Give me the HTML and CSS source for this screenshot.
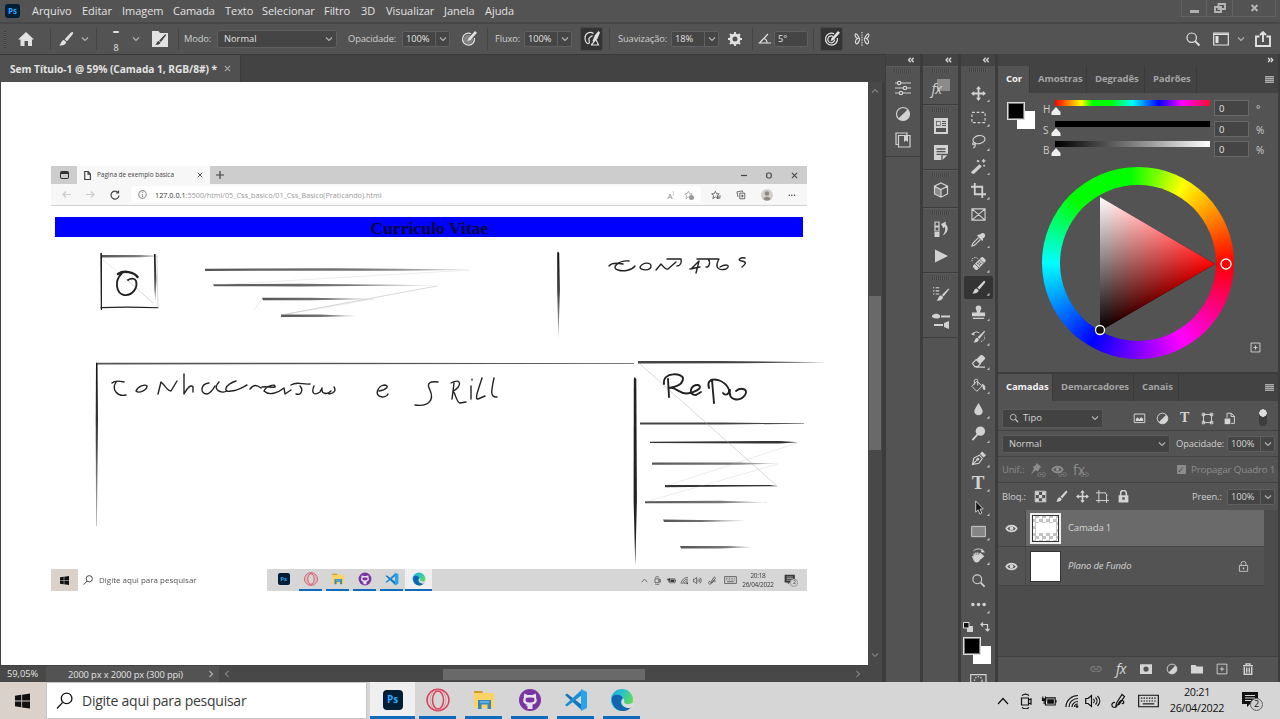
FILE: index.html
```html
<!DOCTYPE html>
<html lang="pt-BR">
<head>
<meta charset="utf-8">
<title>Sem Título-1 @ 59%</title>
<link rel="stylesheet" href="styles.css">
</head>
<body>
<svg class="defs" aria-hidden="true">
<defs>
<symbol id="chev" viewBox="0 0 8 8"><path class="ln" d="M1 2.500 4 5.500 7 2.500"/></symbol>
<symbol id="home" viewBox="0 0 16 16"><path d="M8 1 16 8.500H14V15H10V10H6.500V15H2.500V8.500H0Z"/></symbol>
<symbol id="brush" viewBox="0 0 16 16"><path d="M14.500 1C15.500 1.500 15.200 2.500 14.500 3.500L9 10.200 6.700 8.200 13 1.500C13.500 1 14 .8 14.500 1ZM6 9 8.200 11C8 13.500 5 15 1 14.300 3.500 13.500 2.500 9.500 6 9Z"/></symbol>
<symbol id="brushbox" viewBox="0 0 16 16"><path d="M0 0H6.500L8 2H16V16H0Z"/><path class="dk" d="M13.500 3 14.200 4 9 11 7.200 9.500ZM6.500 10 8.500 11.500C8 13.500 6 14 3 13.800 5 13 4.500 10.500 6.500 10Z"/></symbol>
<symbol id="pressop" viewBox="0 0 16 16"><path class="ln" d="M10 2.700A6 6 0 1 0 13.400 7M9 5.500A3.400 3.400 0 1 0 10.600 8.500"/><path d="M14 0 16 1.800 9.500 9 6.500 10.200 7.600 7.200Z"/></symbol>
<symbol id="press" viewBox="0 0 16 16"><path class="ln" d="M10 2.700A6 6 0 1 0 13.400 7"/><path class="soft" d="M9 4A4.700 4.700 0 1 0 12 8Z"/><path d="M14 0 16 1.800 9.500 9 6.500 10.200 7.600 7.200Z"/></symbol>
<symbol id="airbrush" viewBox="0 0 16 16"><path class="ln" d="M9.500 2.500C6 0 1 2 1 7 1 10 2.500 13 4.500 12.500 6.500 12 4.500 9.500 5 7.500 5.500 6 7.500 5.500 8.500 4.500M7 13.500C9.500 13 9.500 10 12 8.500L14.500 14H7"/><path d="M14.500 0 16 1.500 13.500 7.500 9.500 11 8.500 10 11 4Z"/></symbol>
<symbol id="gear" viewBox="0 0 16 16"><circle cx="8" cy="8" r="4" fill="none" stroke="currentColor" stroke-width="3"/><path class="ln th" d="M8 1V4M8 12V15M1 8H4M12 8H15M3 3 5 5M11 11 13 13M13 3 11 5M5 11 3 13"/></symbol>
<symbol id="angle" viewBox="0 0 16 16"><path class="ln" d="M10 3 1.500 12H13M6 7.500C8 8 9 10 9 12"/></symbol>
<symbol id="butter" viewBox="0 0 18 16"><path class="ln" d="M6.500 8C5 6 4 2 2 2 0 3 2 7 4 7.500 1 9 1 13 3 13.500 5 13 6 10 6.500 8M11.500 8C13 6 14 2 16 2 18 3 16 7 14 7.500 17 9 17 13 15 13.500 13 13 12 10 11.500 8"/><path class="ln dash" d="M9 0V16"/></symbol>
<symbol id="lens" viewBox="0 0 16 16"><circle class="ln" cx="6.700" cy="6.700" r="4.700"/><path class="ln th" d="M10.300 10.300 14.500 14.500"/></symbol>
<symbol id="wspace" viewBox="0 0 16 16"><path class="ln" d="M.7 2H15.300V14H.7ZM1 3.300H15"/><path d="M2.500 5H5.500V12H2.500Z"/></symbol>
<symbol id="share" viewBox="0 0 16 16"><path class="ln th" d="M4.500 5.500H1V15H15V5.500H11.500M8 11V1.500M5 4 8 1.200 11 4"/></symbol>
<symbol id="sliders" viewBox="0 0 16 16"><path class="ln" d="M0 3H2.500M6 3H16M0 8H8M12 8H16M0 13H4M8 13H16"/><circle class="ln" cx="4.200" cy="3" r="1.700"/><circle class="ln" cx="10" cy="8" r="1.700"/><circle class="ln" cx="6" cy="13" r="1.700"/></symbol>
<symbol id="half" viewBox="0 0 16 16"><circle class="ln" cx="8" cy="8" r="6.500"/><path d="M12.600 3.400A6.500 6.500 0 0 1 3.400 12.600Z"/></symbol>
<symbol id="book" viewBox="0 0 16 16"><path class="ln" d="M3.500 3.500V15H15V3.500ZM3.500 12.500H1V1H12V3.500"/><path d="M9 3.500H13V10L11 8.500 9 10Z"/></symbol>
<symbol id="card" viewBox="0 0 16 16"><path fill-rule="evenodd" d="M1 0H15V16H1ZM3 3V8H7.500V3ZM3 10V14H13V10ZM9 3V8H13V3Z"/><path d="M3.700 3.700H7V7.300H3.700ZM9 4H13V5H9ZM9 6H13V7H9Z"/></symbol>
<symbol id="note" viewBox="0 0 16 16"><path d="M1 0H15V9.500L9.500 15H1Z"/><path fill="none" stroke="#535353" stroke-width="1.300" d="M3.500 4H12.500M3.500 6.700H12.500M3.500 9.400H8M9 15V9.500H15"/></symbol>
<symbol id="cube" viewBox="0 0 16 16"><path fill="#8b8b8b" d="M1.500 4.500 8 7.500V15L1.500 12Z"/><path class="ln" d="M8 1 14.500 4.200V12L8 15.200 1.500 12V4.200ZM1.500 4.200 8 7.500 14.500 4.200M8 7.500V15"/></symbol>
<symbol id="hist" viewBox="0 0 16 16"><path class="ln" d="M2 1H6V5H2ZM2 6H6V10H2Z"/><path d="M1.500 11H6.500V16H1.500ZM8 3 13 .5 12.500 3C16 6 15.500 12 9.500 14.500 13 10 12.500 7 11.500 5.500L10.500 7.500Z"/></symbol>
<symbol id="play" viewBox="0 0 16 16"><path d="M2 1.500 15 8 2 14.500Z"/></symbol>
<symbol id="bset" viewBox="0 0 20 18"><path class="ln" d="M1 2H2.500M4 2H8M1 5.500H2.500M4 5.500H8M1 9H2.500M4 9H8"/><path d="M19.500 3.500 13 11.500 11 10 18 3ZM10 10.500 12.500 12.500C12 15.500 9 17 5 16.500 7.500 15 6.500 11.500 10 10.500Z"/></symbol>
<symbol id="bmix" viewBox="0 0 20 16"><path d="M1 2.500C4 0 7 0 9 2.500V4.500C7 6.500 4 5.500 1 4ZM10 2.500H19V4.500H10ZM3 11H12V13H3ZM13 10 18 8V16L13 14Z"/></symbol>
<symbol id="move" viewBox="0 0 16 16"><path class="ln th" d="M8 2V14M2 8H14"/><path d="M8 0 10.700 3.500H5.300ZM8 16 10.700 12.500H5.300ZM0 8 3.500 5.300V10.700ZM16 8 12.500 5.300V10.700Z"/></symbol>
<symbol id="marq" viewBox="0 0 16 16"><path class="ln" stroke-dasharray="3 2" d="M1 2.500H15V13.500H1Z"/></symbol>
<symbol id="lasso" viewBox="0 0 16 16"><ellipse class="ln" cx="8.500" cy="6" rx="6.500" ry="4.300" transform="rotate(-10 8.500 6)"/><path class="ln" d="M4 9.500C1 9 1 12 3.500 11.500 5.500 11 5 9.500 3.500 9.500M4.500 11.500C5 13 4 14 2.500 15"/></symbol>
<symbol id="wand" viewBox="0 0 16 16"><path d="M9 5.500 11.500 8 3 16 0 15 1 13Z"/><path class="ln" d="M7.500 1V3.500M6.200 2.200H8.800M13.500 0V4M11.500 2H15.500M14 6V8M13 7H15"/></symbol>
<symbol id="crop" viewBox="0 0 16 16"><path class="ln th" d="M4 0V12H16M0 4H12V16"/></symbol>
<symbol id="frame" viewBox="0 0 16 16"><path class="ln" d="M1 2H15V14H1ZM1 2 15 14M15 2 1 14"/></symbol>
<symbol id="drop" viewBox="0 0 16 16"><path d="M10 2.500C13 -1 17 3 14 6L12.500 7 13 8.500 12 9.500 6.500 4 7.500 3Z"/><path class="ln" d="M8 6 2 12 1 15 4 14 10 8"/></symbol>
<symbol id="heal" viewBox="0 0 18 16"><g transform="rotate(-45 10 8)"><rect x="1.500" y="4.500" width="17" height="7" rx="2"/><path stroke="#535353" fill="none" d="M6 4V12M14 4V12"/><path fill="#535353" d="M8 6H9.500V7.500H8ZM10.500 8.500H12V10H10.500ZM8 8.500H9.500V10H8ZM10.500 6H12V7.500H10.500Z"/></g><path class="ln dash" d="M8 2C4-1 0 2 1.500 6"/></symbol>
<symbol id="stamp" viewBox="0 0 16 16"><path d="M5 3.500A3 3 0 0 1 11 3.500C11 5 9.500 6 9.700 8H15V12H1V8H6.300C6.500 6 5 5 5 3.500ZM2 13.500H14V15H2Z"/></symbol>
<symbol id="hbrush" viewBox="0 0 18 16"><path d="M16 1 17 2 10 11 8 9ZM7.500 9.500 9.500 11.500C9 14 6 15.500 3 15 5 13.500 4.500 10 7.500 9.500ZM0 5 4 2.500V7Z"/><path class="ln" d="M3 4C6 2 8 2 10 4"/><path class="ln dash" d="M12 14C16 13 17 10 16 7"/></symbol>
<symbol id="erase" viewBox="0 0 16 16"><path class="ln" d="M1.500 11 5.500 7 10 11.500 7 14.500H4ZM5 15H15"/><path d="M5.500 7 10.500 2H12L15 5V6.500L10 11.500Z"/></symbol>
<symbol id="bucket" viewBox="0 0 18 16"><path class="ln" d="M7 3 13.500 8.500 7 15 1 9ZM4 7V1.500C5 0 8 0 8 2V8"/><path d="M13 6C17 7 17.500 10 17 13 15 14 14 12 14 10Z"/></symbol>
<symbol id="blur" viewBox="0 0 16 16"><path d="M8 1C10 5 12.500 7 12.500 10.500A4.600 4.600 0 0 1 3.500 10.500C3.500 7 6 5 8 1Z"/></symbol>
<symbol id="dodge" viewBox="0 0 16 16"><circle cx="10" cy="5.500" r="5"/><path class="ln th" d="M7 9 1.500 15"/></symbol>
<symbol id="pen" viewBox="0 0 16 16"><path class="ln" d="M1.500 14.500 3 7.500 9 4.500 12 8 8.500 13ZM2 14 7 9"/><circle cx="7.300" cy="8.700" r="1.400"/><path d="M9.500 3 12 0.500 16 4.500 13.500 7Z"/></symbol>
<symbol id="arrow" viewBox="0 0 16 16"><path fill="#161616" stroke="currentColor" d="M5 1V13L7.500 10.500 9.500 15 11.500 14 9.700 9.700 13 9.500Z"/></symbol>
<symbol id="rect" viewBox="0 0 16 16"><path fill="#858585" stroke="currentColor" d="M.7 2.500H15.300V13.500H.7Z"/></symbol>
<symbol id="hand" viewBox="0 0 18 17"><path d="M1 9 3 9.500V6H4.500V8H5V5H6.700V8H7.300V5H9V8H9.500V6H11V12C11 18 4 18 3 14ZM11 5 16 9.500 11 14ZM13 0 17 5 12 4.500Z"/><path class="ln" d="M3 3C6 0 11 0 14 2.500"/></symbol>
<symbol id="dots" viewBox="0 0 16 16"><circle cx="2" cy="8" r="1.900"/><circle cx="8" cy="8" r="1.900"/><circle cx="14" cy="8" r="1.900"/></symbol>
<symbol id="pic" viewBox="0 0 16 16"><path class="ln" d="M1.500 2.500H14.500V13H1.500Z"/><path d="M3.500 11V8.500L5.500 6.500 8 9 10 6 12.500 8.500V11Z"/></symbol>
<symbol id="shape" viewBox="0 0 16 16"><path class="ln" d="M3 3H13V13H3ZM1.500 1.500H4.500V4.500H1.500ZM11.500 1.500H14.500V4.500H11.500ZM1.500 11.500H4.500V14.500H1.500ZM11.500 11.500H14.500V14.500H11.500Z"/></symbol>
<symbol id="smart" viewBox="0 0 16 16"><path class="ln" d="M5 7V1.500H10L14 5V14H10M10 2V5.500H14"/><path d="M2 8H9V15H2Z"/></symbol>
<symbol id="eye" viewBox="0 0 16 16"><path class="ln th" d="M1.500 8C4.500 3.300 11.500 3.300 14.500 8 11.500 12.700 4.500 12.700 1.500 8Z"/><circle cx="8" cy="7.800" r="2.300"/></symbol>
<symbol id="linkb" viewBox="0 0 16 16"><path class="ln" d="M7 5H4A3 3 0 0 0 4 11H7M9 5H12A3 3 0 0 1 12 11H9M5 8H11"/></symbol>
<symbol id="pin" viewBox="0 0 16 16"><path d="M8 0 14 5 12 6 10 10 7 9 1 14 5 7 3.500 4.500 7 3Z"/></symbol>
<symbol id="check4" viewBox="0 0 16 16"><path class="ln" d="M1.500 1.500H14.500V14.500H1.500Z"/><path d="M2 2H6V6H2ZM10 2H14V6H10ZM6 6H10V10H6ZM2 10H6V14H2ZM10 10H14V14H10Z"/></symbol>
<symbol id="artb" viewBox="0 0 16 16"><path class="ln" d="M3.500 0V16M0 3.500H12M0 13H16M13 5V16M11 3.500 14 6.500"/></symbol>
<symbol id="lockf" viewBox="0 0 16 16"><path class="ln th" d="M4.500 7V4A3.500 3.500 0 0 1 11.500 4V7"/><path fill-rule="evenodd" d="M2 6.500H14V15.500H2ZM6.500 9V12H9.500V9Z"/></symbol>
<symbol id="locko" viewBox="0 0 16 16"><path class="ln" d="M2 6.500H14V15H2ZM4.500 6.500V4A3.500 3.500 0 0 1 11.500 4V6.500"/><path d="M7 9.500H9V12H7Z"/></symbol>
<symbol id="mask" viewBox="0 0 16 16"><path fill-rule="evenodd" d="M0 1.500H16V14.500H0ZM8 4.500A3.500 3.500 0 1 0 8 11.500 3.500 3.500 0 1 0 8 4.500Z"/></symbol>
<symbol id="folder" viewBox="0 0 16 16"><path d="M0 2.500H6L7.500 4.500H16V14H0Z"/></symbol>
<symbol id="plus" viewBox="0 0 16 16"><path class="ln" d="M1.500 1.500H14.500V14.500H1.500ZM8 5V11M5 8H11"/></symbol>
<symbol id="trash" viewBox="0 0 16 16"><path class="ln th" d="M1.500 3.500H14.500M5.500 3V1.200H10.500V3M3 5V15H13V5M6.300 6V13M9.700 6V13"/></symbol>
<symbol id="win" viewBox="0 0 16 16"><path d="M0 2.300 6.700 1.400V7.500H0ZM7.600 1.200 16 0V7.500H7.600ZM0 8.500H6.700V14.600L0 13.700ZM7.600 8.500H16V16L7.600 14.800Z"/></symbol>
<symbol id="glass" viewBox="0 0 16 16"><circle class="ln" cx="10" cy="6" r="5"/><path class="ln" d="M6.300 9.700 1 15.500"/></symbol>
<symbol id="opera" viewBox="0 0 24 24"><ellipse cx="12" cy="12" rx="11" ry="10.700" fill="none" stroke="#d8415c" stroke-width="1.500"/><ellipse cx="12" cy="12" rx="5.500" ry="9" fill="none" stroke="#d8415c" stroke-width="1.500"/><ellipse cx="12" cy="12" rx="8" ry="10.300" fill="none" stroke="#e4758a" stroke-width=".6"/></symbol>
<symbol id="files" viewBox="0 0 24 24"><path fill="#d79a27" d="M2 3H10L12 6H2Z"/><path fill="#fbd464" d="M2 5H22V20H2Z"/><path fill="#3d86bd" d="M6 21V12H19V21H15.500V16.500H9.500V21Z"/><path fill="#5bb3e4" d="M8 13H17V15H8Z"/></symbol>
<symbol id="github" viewBox="0 0 24 24"><circle cx="12" cy="12" r="11" fill="#7a36a0"/><path fill="#e7e2ec" d="M6.500 5.500 9.500 7H14.500L17.500 5.500C18 7 18.500 8.500 18 9.500 20 14 17.500 16 14.500 16.500V21H9.500V18L7 17 9.500 16.500C6 16 4 14 6 9.500 5.500 8.500 6 7 6.500 5.500Z"/><path fill="#7a36a0" d="M8 10C9 9.300 15 9.300 16 10 17.500 14 14.500 14.500 12 14.500S6.500 14 8 10Z"/></symbol>
<symbol id="vscode" viewBox="0 0 24 24"><path fill="#1675b7" d="M1 7 3 5.500 18 17V22.500Z"/><path fill="#1b8ed3" d="M1 17 3 18.500 18 7V1.500Z"/><path fill="#28a4ed" d="M17 1 23 4V20L17 23Z"/></symbol>
<symbol id="edge" viewBox="0 0 24 24"><circle cx="12" cy="12" r="11" fill="url(#edg)"/><path fill="#1263b1" d="M2 9C1 17 6 23 13 23 17 23 20 21 21.500 18.500 17 20.500 12 19 11 15.500 10 12 13 11 12.500 9.500 11 6 4 6 2 9Z"/><path fill="#dcdcdc" d="M13 10.500C16 12 12.500 13.500 15 15.500 18 17 21 16 22.500 14.500L24 17 20 20C15 20.500 11 17 11.500 13Z"/></symbol>
<linearGradient id="edg" x1="0" y1="0" x2="1" y2=".5"><stop offset="0" stop-color="#1aa7de"/><stop offset=".5" stop-color="#2cc3c6"/><stop offset="1" stop-color="#63dc53"/></linearGradient>
<symbol id="up" viewBox="0 0 16 16"><path class="ln" d="M3 11 8 5.500 13 11"/></symbol>
<symbol id="cam" viewBox="0 0 16 16"><path class="ln" d="M3.500 5H10.500V12H3.500ZM10.500 7 13 6V11L10.500 10M4 2.500C6 .8 9 .8 11 2.500M4 14.500C6 16 9 16 11 14.500"/></symbol>
<symbol id="batt" viewBox="0 0 18 16"><path class="ln" d="M5 4.500H16V12.500H5ZM2 3V6M5 3V6M3.500 8V11.500"/><path d="M1 5H6V8H1ZM7 6H14.500V11H7ZM16 7H17.500V10H16Z"/></symbol>
<symbol id="wifi" viewBox="0 0 16 16"><path class="ln" d="M2 14C2 7 8 2.500 14 2.500M5 14C5 9 9 5.500 14 5.500M8 14C8 11 10.500 8.500 14 8.500M10.500 14C10.500 12 12 11 14 11"/><circle cx="13" cy="13.500" r="1.300"/></symbol>
<symbol id="vol" viewBox="0 0 16 16"><path class="ln" d="M.7 5.500H3L6.500 2.500V13.500L3 10.500H.7ZM8.500 6C9.500 7 9.500 9 8.500 10M10.500 4.500C12.500 6.500 12.500 9.500 10.500 11.500M12.500 3C15.500 6 15.500 10 12.500 13"/></symbol>
<symbol id="ink" viewBox="0 0 16 16"><path class="ln" d="M5.500 10 11 1.500 13.500 3.500 8 11.500 5 12.500ZM4 9.500C0 9 0 14 3 14.500 8 15 7 6 11.500 7.500 14 9 12 12 11 10"/></symbol>
<symbol id="kbd" viewBox="0 0 22 14"><path class="ln" d="M.7 1H21.300V13H.7Z"/><path class="ln dash" d="M3 4H19M3 7H19"/><path class="ln" d="M5 10H17"/></symbol>
<symbol id="notif" viewBox="0 0 22 20"><path d="M1 1H17V13H9L6 16V13H1Z"/><path stroke="#d6d6d6" d="M4 4.500H14M4 7H14M4 9.500H10"/><circle cx="15.500" cy="13.500" r="6" fill="#cfcfcf" stroke="#666"/></symbol>
<symbol id="star" viewBox="0 0 16 16"><path class="ln" d="M7 2 9 6H13L10 9 11 14 7 11 3 14 4 9 1 6H5Z"/><path d="M10 9H16V10.500H10ZM10 12H15V13.500H10Z"/></symbol>
<symbol id="stara" viewBox="0 0 16 16"><path class="ln" d="M7 2 9 6H13L10 9 11 14 7 11 3 14 4 9 1 6H5Z"/><circle cx="12" cy="12" r="4"/></symbol>
<symbol id="coll" viewBox="0 0 16 16"><path class="ln" d="M6 5H14V14H6ZM3 11 1.500 3 10 1.500 11 4M10 7V12M7.500 9.500H12.500"/></symbol>
<symbol id="x" viewBox="0 0 8 8"><path class="ln" d="M1 1 7 7M7 1 1 7"/></symbol>
<symbol id="dbl" viewBox="0 0 10 8"><path class="ln th" d="M4.500 1 1.800 4 4.500 7M8.500 1 5.800 4 8.500 7"/></symbol>
</defs>
</svg>

<header class="menubar">
<span class="ps">Ps</span>
<nav class="menus"><span>Arquivo</span><span>Editar</span><span>Imagem</span><span>Camada</span><span>Texto</span><span>Selecionar</span><span>Filtro</span><span>3D</span><span>Visualizar</span><span>Janela</span><span>Ajuda</span></nav>
<div class="winbtns"><span><i class="min"></i></span><span><svg width="12" height="10" viewBox="0 0 12 10"><path class="ln th" d="M4.500 1H11V6H4.500ZM1 4H7V9H1Z"/></svg></span><span><svg width="9" height="8" viewBox="0 0 8 8"><path class="ln th" d="M1 1 7 7M7 1 1 7"/></svg></span></div>
</header>

<div class="options">
<i class="vgrip"></i>
<svg class="i16"><use href="#home"/></svg><i class="sep"></i>
<svg class="i16"><use href="#brush"/></svg><svg class="i8"><use href="#chev"/></svg><i class="sep"></i>
<span class="tip"><i></i>8</span><svg class="i8"><use href="#chev"/></svg><svg class="i16"><use href="#brushbox"/></svg><i class="sep"></i>
<span class="lab">Modo:</span><span class="sel s120">Normal<svg class="i8"><use href="#chev"/></svg></span>
<span class="lab">Opacidade:</span><span class="num">100%<b><svg class="i8"><use href="#chev"/></svg></b></span>
<svg class="i16"><use href="#press"/></svg><i class="sep"></i>
<span class="lab">Fluxo:</span><span class="num">100%<b><svg class="i8"><use href="#chev"/></svg></b></span>
<span class="on"><svg class="i16"><use href="#airbrush"/></svg></span><i class="sep"></i>
<span class="lab">Suavização:</span><span class="num">18%<b><svg class="i8"><use href="#chev"/></svg></b></span>
<svg class="i16"><use href="#gear"/></svg><i class="sep"></i>
<svg class="i16"><use href="#angle"/></svg><span class="num plain">5°</span><i class="sep"></i>
<span class="on"><svg class="i16"><use href="#pressop"/></svg></span><svg class="i16"><use href="#butter"/></svg>
<svg class="i16"><use href="#lens"/></svg><svg class="i16"><use href="#wspace"/></svg><svg class="i8"><use href="#chev"/></svg><svg class="i16"><use href="#share"/></svg>
</div>

<main class="work">
<section class="doc">
<div class="tabs"><div class="tab"><span>Sem Título-1 @ 59% (Camada 1, RGB/8#) *</span><svg class="i7"><use href="#x"/></svg></div></div>
<div class="view">
<div class="canvas">
<div class="shot">
<div class="etabs"><span class="ework"><i></i></span><span class="etab"><svg width="7" height="9" viewBox="0 0 7 9"><path class="ln" d="M.7.5H4.200L6.400 3V8.500H.7ZM4 .5V3.200H6.400"/></svg><em>Pagina de exemplo basica</em><svg width="6" height="6"><use href="#x"/></svg></span><svg class="eplus" width="8" height="8" viewBox="0 0 8 8"><path class="ln" d="M4 0V8M0 4H8"/></svg><span class="ectl"><svg width="6" height="6" viewBox="0 0 6 6"><path class="ln" d="M0 3.500H6"/></svg><svg width="6" height="7" viewBox="0 0 6 7"><rect class="ln" x=".7" y="1" width="4.500" height="5" rx="1.500"/></svg><svg width="7" height="7"><use href="#x"/></svg></span></div>
<div class="ebar"><svg class="fade" width="9" height="7" viewBox="0 0 9 7"><path class="ln" d="M9 3.500H1M4 .5 1 3.500 4 6.500"/></svg><svg class="fade" width="9" height="7" viewBox="0 0 9 7"><path class="ln" d="M0 3.500H8M5 .5 8 3.500 5 6.500"/></svg><svg width="10" height="10" viewBox="0 0 10 10"><path class="ln" d="M8 2.500A4 4 0 1 0 9 5.500M8.500.5V3H6"/></svg>
<div class="eurl"><svg width="9" height="9" viewBox="0 0 9 9"><circle class="ln" cx="4.500" cy="4.500" r="3.800"/><path class="ln" d="M4.500 4V7M4.500 2V3"/></svg><em><b>127.0.0.1</b>:5500/html/05_Css_basico/01_Css_Basico(Praticando).html</em><span>A<sup>)</sup></span><svg width="10" height="10"><use href="#stara"/></svg></div>
<svg width="10" height="10"><use href="#star"/></svg><svg width="10" height="10"><use href="#coll"/></svg><svg width="12" height="12" viewBox="0 0 12 12"><circle cx="6" cy="6" r="6" fill="#d4cec9"/><circle cx="6" cy="4.500" r="2.300" fill="#8f8985"/><path fill="#8f8985" d="M2.500 10C3 7 9 7 9.500 10 8 12 4 12 2.500 10Z"/></svg><span class="more">···</span></div>
<h1 class="cv">Curriculo Vitae</h1>
<div class="etask mini">
<span class="start"><svg width="9" height="9"><use href="#win"/></svg></span>
<span class="find"><svg width="10" height="10"><use href="#glass"/></svg><em>Digite aqui para pesquisar</em></span>
<span class="app idle"><b class="psi">Ps</b></span><span class="app"><svg width="14" height="14"><use href="#opera"/></svg></span><span class="app"><svg width="14" height="14"><use href="#files"/></svg></span><span class="app"><svg width="14" height="14"><use href="#github"/></svg></span><span class="app"><svg width="14" height="14"><use href="#vscode"/></svg></span><span class="app act"><svg width="14" height="14"><use href="#edge"/></svg></span>
<span class="tray"><svg><use href="#up"/></svg><svg><use href="#cam"/></svg><svg><use href="#batt"/></svg><svg><use href="#wifi"/></svg><svg><use href="#vol"/></svg><svg><use href="#ink"/></svg><svg class="k"><use href="#kbd"/></svg><span class="clock">20:18<br>26/04/2022</span><span class="nt"><svg><use href="#notif"/></svg><i>2</i></span></span>
</div>
</div>
<svg class="sketch" viewBox="1 82 867 582" aria-label="contatos, conhecimentos e skill, repo">
<defs>
<linearGradient id="fr"><stop offset="0" stop-color="#555"/><stop offset=".6" stop-color="#777"/><stop offset="1" stop-color="#ccc"/></linearGradient>
<linearGradient id="fd" x2="0" y2="1"><stop offset="0" stop-color="#111"/><stop offset=".5" stop-color="#444"/><stop offset="1" stop-color="#bbb"/></linearGradient>
</defs>
<g fill="url(#fr)">
<path d="M205 268.800 330 268.300 400 268.800 471 269.800 400 270.800 205 270.900Z"/>
<path d="M213 284.200 300 283.800 437 285.300 300 286.400 214 286.300Z"/>
<path d="M262 297.700 310 297.800 375 299 310 300.200 263 300.200Z"/>
<path d="M281 314.400 320 314.500 357 316 320 317 281 317Z"/>
<path d="M101 255H140L159 255.700V256.300L140 257.200 101 257.500Z"/>
<path d="M97 362.700 300 362.700 634 363.300V364L97 364.400Z" fill="#555"/>
<path d="M638 361 720 361 826 362.300 740 363.200 638 363.600Z" fill="#444"/>
<path d="M640 422.500H720L804 423.300V423.800L720 424.500 640 424.500Z" fill="#444"/>
<path d="M650 441.700 780 441 798 442.300 780 443.600 650 442.900Z" fill="#333"/>
<path d="M652 462.600H740L779 463.500 740 464.700H652Z"/>
<path d="M665 485H770L778 486.200 665 487.200Z" fill="#333"/>
<path d="M645 501.200 720 500.800 769 502.300 720 503.200H645Z"/>
<path d="M663 519.600 700 520 747 520.800 700 522 664 522Z"/>
<path d="M680 546 730 546 753 547.300 720 548.400 681 548.400Z"/>
</g>
<g fill="url(#fd)">
<path d="M100.300 253H102L102 310H100.800Z" fill="#222"/>
<path d="M154 254H155.500L156.400 280 155.500 301 154.300 290Z"/>
<path d="M558 251.500 559.200 253 559.900 290 558.400 339 557.200 290 557.200 253Z"/>
<path d="M96 362 97.500 364 98 420 96.900 526H96.100L95.700 420Z"/>
<path d="M634.600 377 636.300 379 636.900 500 635.300 566 633.600 500 633.800 379Z" fill="#222"/>
</g>
<g class="faint"><path class="fainter" d="M102 259 125 278M470 270 214 285M374 299 281 315M262 299 254 310M778 464 645 502M797 443 666 486"/><path d="M125 278 153 303M437 286 281 315M157 256 158 308M640 364 777 486"/></g>
<g class="ink">
<path d="M101 307.600C120 306.800 140 307 158 307.800" stroke-width="1.100"/>
<path d="M137.500 277C134 272 124 270 118 274" stroke-width="2.500"/>
<path d="M122 273C114 281 116 293 124 295 133 296 138 287 136 281 135 278 131 278 128 280" stroke-width="1.900"/>
<path d="M609 266C612 262 618 263 623 264M629 261C619 260 610 268 618 270 624 272 632 270 635 266M640 267C643 262 651 262 651 266 651 271 640 271 640 267M656 270 661 264C664 267 665 270 668 269L676 262M667 259H681C682 263 680 266 677 266M691 269 699 261 696 273M690 269 700 267M697 259 718 259M708 259C711 262 709 268 706 267M719 259C714 268 719 271 726 269 731 266 727 263 720 267M745 258C741 257 736 260 742 261 747 262 746 264 742 267"/>
<path d="M112 383C115 380 120 381 124 382M116 382C111 390 118 397 126 395M136 391C138 386 145 384 147 386 147 390 139 394 136 391M158 394 161 382C165 385 167 391 171 391L177 381M184 374V394C187 388 191 384 193 387L193 392M209 383C200 384 200 394 207 394 209 394 213 390 215 386M219 382C211 390 222 394 227 391M236 381C224 385 223 393 231 391 237 391 243 387 247 385M250 389C254 384 257 385 261 388M262 387C267 386 272 388 275 387 276 383 266 386 264 391 269 396 278 393 284 388L285 394 291 390M291 385C297 381 303 385 310 384M300 386C303 389 302 396 296 394M314 386C311 393 314 396 320 392L322 388C321 394 327 395 331 391M334 387C336 390 335 393 329 394"/>
<path d="M379 391C386 390 390 386 385 385 378 385 373 396 382 397 385 397 387 396 388 394M438 382C430 381 426 383 430 390 434 399 430 407 415 405M454 383 452 399M451 383C462 377 462 387 453 391 456 394 456 402 460 403L466 402M471 386V399M472 379.300V380M482 378C479 388 474 400 478 399L485 396M494 378C492 388 489 398 497 397"/>
<path stroke-width="1.900" d="M669 397 668 379M664 384C662 371 684 373 683 379 682 386 674 387 669 388 677 386 679 396 690 393 698 391 703 387 698 385 691 384 687 395 696 395L701 392M714 403 712 380M709 388C705 376 721 378 727 386 732 393 726 397 723 393M730 390C728 401 740 402 745 395 749 389 741 387 736 391"/>
</g>
</svg>
</div>
<div class="vscroll"><svg class="i8 flip"><use href="#chev"/></svg><i></i><svg class="i8"><use href="#chev"/></svg></div>
</div>
<div class="status"><span>59,05%</span><span class="dim">2000 px x 2000 px (300 ppi)<svg class="i8 rt"><use href="#chev"/></svg></span><div class="hscroll"><svg class="i8 lf"><use href="#chev"/></svg><i></i><svg class="i8 rt"><use href="#chev"/></svg></div></div>
</section>

<aside class="dock">
<svg class="col"><use href="#dbl"/></svg>
<div class="grp"><i class="grip"></i><svg class="i16"><use href="#sliders"/></svg><svg class="i16"><use href="#half"/></svg><svg class="i16"><use href="#book"/></svg></div>
</aside>
<aside class="dock">
<svg class="col"><use href="#dbl"/></svg>
<div class="grp g1"><i class="grip"></i><span class="fxb">fx</span></div>
<div class="grp g2"><i class="grip"></i><svg class="i16"><use href="#card"/></svg><svg class="i16"><use href="#note"/></svg></div>
<div class="grp g3"><i class="grip"></i><svg class="i16"><use href="#cube"/></svg></div>
<div class="grp g2"><i class="grip"></i><svg class="i16"><use href="#hist"/></svg><svg class="i16"><use href="#play"/></svg></div>
<div class="grp g2"><i class="grip"></i><svg class="i16 w20"><use href="#bset"/></svg><svg class="i16 w20"><use href="#bmix"/></svg></div>
</aside>
<aside class="dock tools">
<svg class="col"><use href="#dbl"/></svg><i class="grip"></i>
<div class="tl">
<span><svg><use href="#move"/></svg></span><span><svg><use href="#marq"/></svg></span><span><svg><use href="#lasso"/></svg></span><span><svg><use href="#wand"/></svg></span><span><svg><use href="#crop"/></svg></span><span class="nof"><svg><use href="#frame"/></svg></span><span><svg><use href="#drop"/></svg></span><span><svg><use href="#heal"/></svg></span><span class="cur"><svg><use href="#brush"/></svg></span><span><svg><use href="#stamp"/></svg></span><span><svg><use href="#hbrush"/></svg></span><span><svg><use href="#erase"/></svg></span><span><svg><use href="#bucket"/></svg></span><span><svg><use href="#blur"/></svg></span><span><svg><use href="#dodge"/></svg></span><span><svg><use href="#pen"/></svg></span><span class="tt">T</span><span><svg><use href="#arrow"/></svg></span><span><svg><use href="#rect"/></svg></span><span><svg><use href="#hand"/></svg></span><span class="nof"><svg><use href="#lens"/></svg></span><span><svg><use href="#dots"/></svg></span>
</div>
<div class="mini2"><svg width="10" height="10" viewBox="0 0 10 10"><path d="M4 4H10V10H4Z"/><path fill="#111" stroke="#ddd" d="M.5.5H6V6H.5Z"/></svg><svg width="10" height="10" viewBox="0 0 10 10"><path class="ln" d="M1 2.500H7.500V8M3 .5 1 2.500 3 4.500M5.500 7 7.500 9 9.500 7"/></svg></div>
<div class="swatch"><i></i><b></b></div>
<svg class="qm" width="17" height="8" viewBox="0 0 17 8"><path class="ln" d="M.7 12V.7H16V12"/><circle class="ln dash" cx="8.300" cy="6.500" r="3.800"/></svg>
</aside>

<aside class="panels">
<div class="phead"><svg class="col"><use href="#dbl"/></svg></div>
<section class="color">
<div class="ptabs c"><span class="a">Cor</span><span>Amostras</span><span>Degradês</span><span>Padrões</span><i class="burger"></i></div>
<div class="hsb">
<div class="swatch"><i></i><b></b></div>
<div class="sl"><span>H</span><div class="tr hue"><svg class="th1" viewBox="0 0 10 10"><path d="M5 0 10 5.500V9H0V5.500Z"/></svg></div><em>0</em><span>°</span></div>
<div class="sl"><span>S</span><div class="tr sat"><svg class="th1" viewBox="0 0 10 10"><path d="M5 0 10 5.500V9H0V5.500Z"/></svg></div><em>0</em><span>%</span></div>
<div class="sl"><span>B</span><div class="tr bri"><svg class="th1" viewBox="0 0 10 10"><path d="M5 0 10 5.500V9H0V5.500Z"/></svg></div><em>0</em><span>%</span></div>
</div>
<div class="wheel"><div class="ring"><svg viewBox="0 0 192 192" width="192" height="192">
<defs><linearGradient id="ta" gradientUnits="userSpaceOnUse" x1="58" y1="164" x2="115.500" y2="63.500"><stop offset="0" stop-color="#000"/><stop offset="1" stop-color="#f00"/></linearGradient><linearGradient id="tb" gradientUnits="userSpaceOnUse" x1="58" y1="30" x2="115.500" y2="130.500"><stop offset="0" stop-color="#0ff"/><stop offset="1" stop-color="#000"/></linearGradient></defs>
<circle cx="96" cy="96" r="78" fill="#535353"/>
<g class="iso"><path fill="url(#ta)" d="M58 30 173 97 58 164Z"/><path class="scr" fill="url(#tb)" d="M58 30 173 97 58 164Z"/></g>
<circle cx="184" cy="97" r="5" fill="#f00" stroke="#fff" stroke-width="1.300"/><circle cx="58" cy="163" r="4.500" fill="#111" stroke="#fff" stroke-width="1.300"/></svg></div>
<svg class="addc" width="11" height="11"><use href="#plus"/></svg></div>
</section>
<section class="layers">
<div class="ptabs l"><span class="a">Camadas</span><span>Demarcadores</span><span>Canais</span><i class="burger"></i></div>
<div class="prow r1"><span class="sel tipo"><svg class="i10"><use href="#lens"/></svg>Tipo<svg class="i8"><use href="#chev"/></svg></span><svg><use href="#pic"/></svg><svg><use href="#half"/></svg><b class="tser">T</b><svg><use href="#shape"/></svg><svg><use href="#smart"/></svg><i class="tog"></i></div>
<div class="prow r2"><span class="sel">Normal<svg class="i8"><use href="#chev"/></svg></span><span class="lab">Opacidade:</span><span class="num">100%<b><svg class="i8"><use href="#chev"/></svg></b></span></div>
<div class="prow r3"><span class="lab">Unif.:</span><span class="lk"><svg><use href="#pin"/></svg><svg class="s"><use href="#linkb"/></svg></span><span class="lk"><svg><use href="#eye"/></svg><svg class="s"><use href="#linkb"/></svg></span><span class="lk"><em>fx</em><svg class="s"><use href="#linkb"/></svg></span><i class="ck">✓</i><span class="lab prop">Propagar Quadro 1</span></div>
<div class="prow r4"><span class="lab">Bloq.:</span><svg><use href="#check4"/></svg><svg><use href="#brush"/></svg><svg><use href="#move"/></svg><svg><use href="#artb"/></svg><svg><use href="#lockf"/></svg><span class="lab">Preen.:</span><span class="num">100%<b><svg class="i8"><use href="#chev"/></svg></b></span></div>
<div class="list">
<div class="layer sel1"><span class="ey"><svg><use href="#eye"/></svg></span><div class="lbody"><i class="thumb chk"></i><span>Camada 1</span></div></div>
<div class="layer"><span class="ey"><svg><use href="#eye"/></svg></span><div class="lbody"><i class="thumb"></i><em>Plano de Fundo</em><svg class="lk2"><use href="#locko"/></svg></div></div>
</div>
<div class="pfoot"><svg class="off"><use href="#linkb"/></svg><em>fx</em><svg><use href="#mask"/></svg><svg><use href="#half"/></svg><svg><use href="#folder"/></svg><svg><use href="#plus"/></svg><svg><use href="#trash"/></svg></div>
</section>
</aside>
</main>

<footer class="etask">
<span class="start"><svg width="15" height="16"><use href="#win"/></svg></span>
<span class="find"><svg width="17" height="17"><use href="#glass"/></svg><em>Digite aqui para pesquisar</em></span>
<span class="app act"><b class="psi">Ps</b></span><span class="app"><svg width="24" height="24"><use href="#opera"/></svg></span><span class="app"><svg width="24" height="24"><use href="#files"/></svg></span><span class="app"><svg width="24" height="24"><use href="#github"/></svg></span><span class="app"><svg width="24" height="24"><use href="#vscode"/></svg></span><span class="app"><svg width="24" height="24"><use href="#edge"/></svg></span>
<span class="tray"><svg><use href="#up"/></svg><svg><use href="#cam"/></svg><svg><use href="#batt"/></svg><svg><use href="#wifi"/></svg><svg><use href="#vol"/></svg><svg><use href="#ink"/></svg><svg class="k"><use href="#kbd"/></svg><span class="clock">20:21<br>26/04/2022</span><span class="nt"><svg><use href="#notif"/></svg><i>2</i></span></span>
</footer>
</body>
</html>
```
FILE: styles.css
```css
* { box-sizing: border-box; }
html, body { margin: 0; height: 719px; overflow: hidden; }
body {
  width: 1280px; display: grid; grid-template-rows: 22px 32px 628px 37px;
  background: #434343; color: #e2e2e2;
  font: 10px/14px "Open Sans", "Noto Sans", sans-serif;
}
i, em { font-style: normal; }
svg { display: block; fill: currentColor; flex: none; overflow: visible; }
.defs { position: absolute; width: 0; height: 0; }
.ln { fill: none; stroke: currentColor; stroke-width: 1.2; }
.th { stroke-width: 1.9; }
.dash { stroke-dasharray: 1.5 1.3; }
.dk { fill: #434343; }
.soft { opacity: .35; }
.i16 { width: 16px; height: 16px; }
.i10 { width: 10px; height: 10px; }
.i8 { width: 8px; height: 8px; color: #b0b0b0; }
.i7 { width: 7px; height: 7px; color: #aaa; }
.flip { transform: rotate(180deg); }
.rt { transform: rotate(-90deg); }
.lf { transform: rotate(90deg); }

/* menu bar */
.menubar { display: flex; align-items: center; background: #535353; padding-left: 5px; }
.ps {
  width: 15px; height: 14px; margin-top: -1px; border-radius: 3px; background: #001e36; color: #31a8ff;
  font: bold 8px/13px "Open Sans", sans-serif; text-align: center;
}
.menus {
  display: grid; margin-left: 12px; font-size: 11px; letter-spacing: -.05px; white-space: nowrap;
  grid-template-columns: 50px 40px 51px 52px 37px 62px 37px 25px 58px 41px 40px;
}
.winbtns { display: flex; align-self: flex-start; margin-left: auto; margin-right: 4px; color: #b5b5b5; }
.winbtns span { width: 26px; height: 17px; border: 1px solid #626262; border-top: 0; border-left: 0; display: grid; place-items: center; }
.winbtns span:first-child { border-left: 1px solid #626262; }
.winbtns span:last-child { width: 43px; }
.min { width: 9px; height: 3px; background: #b0b0b0; margin-top: 6px; }

/* options bar */
.options {
  display: grid; align-items: center; border-top: 2px solid #474747; background: #535353; padding-left: 4px;
  grid-template-columns: 14px 32px 8px 23px 15px 12px 24px 20px 26px 6px 33px 131px 54px 59px 26px 8px 29px 56px 29px 9px 53px 56px 25px 6px 16px 39px 7px 34px 331px 28px 24px 18px 25px;
}
.vgrip { width: 2px; height: 17px; background: repeating-linear-gradient(#3e3e3e 0 1px, #5e5e5e 1px 2px); }
.sep { width: 1px; height: 22px; background: #454545; }
.tip { width: 16px; height: 24px; display: flex; flex-direction: column; align-items: center; font-size: 9px; line-height: 11px; gap: 9px; padding-top: 4px; }
.tip i { width: 6px; height: 2px; border-radius: 1px; background: #ddd; flex: none; }
.lab { font-size: 9.3px; letter-spacing: -.1px; color: #cfcfcf; white-space: nowrap; }
.sel {
  display: flex; align-items: center; height: 18px; padding: 0 3px 0 6px; font-size: 9.3px;
  background: #454545; border: 1px solid #606060; border-radius: 2px;
}
.sel > .i8:last-child { margin-left: auto; }
.s120 { width: 120px; }
.num {
  width: 48px; height: 16px; padding-left: 3px; display: flex; align-items: center; font-size: 9.3px; letter-spacing: -.1px;
  background: #454545; border: 1px solid #606060; border-radius: 2px;
}
.num b { margin-left: auto; width: 14px; height: 14px; border-left: 1px solid #606060; display: grid; place-items: center; }
.plain { width: 34px; }
.on { width: 23px; height: 24px; background: #343434; border: 1px solid #484848; border-radius: 2px; display: grid; place-items: center; }

/* workspace */
.work { display: grid; grid-template-columns: 885px 37px 38px 37px 283px; background: #3c3c3c; min-height: 0; overflow: hidden; }
.doc { display: grid; grid-template-rows: 28px 584px 16px; background: #434343; }
.tabs { border-top: 1px solid #383838; }
.tab { width: 241px; height: 27px; display: flex; align-items: center; justify-content: space-between; padding: 0 9px 0 10px; background: #505050; border-right: 1px solid #3a3a3a; font-weight: 700; font-size: 10.2px; white-space: nowrap; letter-spacing: -.05px; }
.view { display: grid; grid-template-columns: 868px 17px; }
.canvas { position: relative; margin: 0 0 1px 1px; background: #fff; padding: 84px 61px 0 50px; }
.vscroll { background: #484848; border-right: 3px solid #3c3c3c; display: flex; flex-direction: column; align-items: center; padding-top: 5px; }
.vscroll i { width: 12px; height: 154px; background: #696969; margin: 201px 0; }
.vscroll .i8, .hscroll .i8 { color: #7f7f7f; }
.status { display: grid; grid-template-columns: 46px 173px 1fr; align-items: stretch; background: #484848; font-size: 9.3px; line-height: 15px; white-space: nowrap; border-right: 3px solid #3c3c3c; }
.status > span:first-child { padding-left: 7px; letter-spacing: -.05px; }
.dim { background: #535353; padding: 0 4px 0 22px; display: flex; align-items: center; justify-content: space-between; letter-spacing: -.12px; }
.hscroll { display: flex; align-items: center; padding: 0 20px 0 4px; }
.hscroll i { width: 202px; height: 11px; background: #696969; margin: 0 auto 0 212px; }

/* page shown inside the canvas */
.shot { width: 756px; color: #444; display: grid; grid-template-columns: 756px; grid-template-rows: 18px 22px 11px 20px 332px 22px; filter: blur(.25px); }
.etabs { background: #cdcdcd; display: flex; align-items: center; }
.ework { width: 26px; height: 18px; display: grid; place-items: center; }
.ework i { width: 9px; height: 8px; border: 1px solid #333; border-top-width: 3px; border-radius: 2px; }
.etab { width: 133px; height: 18px; background: #f7f7f7; display: flex; align-items: center; padding: 0 7px; font-size: 6.4px; }
.etab em { margin: 0 auto 0 6px; white-space: nowrap; }
.eplus { margin-left: 6px; }
.ectl { display: flex; align-items: center; gap: 19px; margin-left: auto; margin-right: 9px; }
.ebar { background: #f7f7f7; border-bottom: 1px solid #d2d2d2; display: flex; align-items: center; padding-left: 11px; gap: 15px; }
.fade { opacity: .25; }
.eurl { width: 570px; height: 17px; margin-left: -4px; background: #fff; border-radius: 3px; display: flex; align-items: center; padding: 0 7px; margin-right: -5px; font-size: 7.25px; color: #999; flex: none; }
.eurl em { margin: 0 auto 0 8px; white-space: nowrap; }
.eurl b { font-weight: 400; color: #333; }
.eurl span { margin-right: 10px; font-size: 8px; color: #888; }
.eurl sup { font-size: 5px; }
.more { font-weight: 700; font-size: 9px; }
.cv { grid-row: 4; width: 748px; margin: 0 0 0 4px; background: #00f; color: #050530; font: bold 17.600px/22px "Liberation Serif", "Times New Roman", serif; height: 20px; text-align: center; }
.mini { grid-row: 6; }
.sketch { position: absolute; inset: 0; width: 867px; height: 582px; }
.faint { stroke: #aaa; stroke-width: .45; fill: none; }
.fainter { opacity: .5; }
.ink { stroke: #222; stroke-width: 1.4; fill: none; stroke-linecap: round; stroke-linejoin: round; }

/* icon docks */
.dock { background: #535353; border: solid #3c3c3c; border-width: 0 2px 0 1px; display: flex; flex-direction: column; align-items: center; color: #d2d2d2; }
.col { width: 7px; height: 6px; flex: none; }
.dock > .col { align-self: stretch; width: 100%; height: 12px; padding: 3px 5px 3px 21px; background: #434343; }
.grp { width: 100%; height: 91px; display: flex; flex-direction: column; align-items: center; gap: 10px; border-bottom: 1px solid #3c3c3c; border-top: 1px solid #5b5b5b; }
.grip { width: 18px; height: 4px; margin: 2px 0 0; background: repeating-linear-gradient(90deg, #444 0 1px, #5b5b5b 1px 2px); flex: none; }
.grp .grip { margin-bottom: -5px; }
.grp:first-of-type .grip { margin-bottom: -3px; }
.g1 { height: 39px; }
.g2 { height: 65px; gap: 11px; }
.g3 { height: 38px; }
.grp.g1 .grip { margin-bottom: 0; }
.fxb { width: 18px; height: 18px; margin-top: -4px; background: linear-gradient(#8b8b8b, #8b8b8b) right top / 13px 12px no-repeat; font: italic 14px/20px "Open Sans", sans-serif; letter-spacing: -.5px; }
.w20 { width: 20px; }
.tl { display: grid; grid-template-rows: repeat(22, 24.350px); margin-top: 9px; }
.tools > .grip { margin-top: 2px; }
.tl span { width: 29px; display: grid; place-items: center; position: relative; }
.tl svg { width: 15px; height: 15px; }
.tl span::after { content: ""; position: absolute; right: 3px; bottom: 3px; width: 3px; height: 3px; background: #bbb; clip-path: polygon(100% 0, 100% 100%, 0 100%); }
.tl .nof::after { display: none; }
.tl .cur { background: #343434; height: 23px; border-radius: 2px; }
.tt { font: bold 19px/22px "Liberation Serif", serif; }
.mini2 { display: flex; gap: 7px; margin-top: 5px; margin-left: -3px; }
.swatch { width: 28px; height: 27px; display: grid; }
.swatch i, .swatch b { grid-area: 1/1; width: 18px; height: 18px; }
.swatch i { background: #000; border: 1px solid #ddd; outline: 1px solid #777; outline-offset: -2px; z-index: 1; }
.swatch b { background: #fff; place-self: end; }
.tools .swatch { margin-top: 5px; margin-left: -2px; flex: none; }
.qm { margin-top: 10px; }

/* panels */
.panels { background: #535353; border-left: 1px solid #3c3c3c; border-right: 2px solid #3c3c3c; display: grid; grid-template-rows: 12px 308px 308px; }
.phead { background: #434343; display: flex; justify-content: flex-end; align-items: center; padding-right: 4px; }
.phead svg { transform: rotate(180deg); }
.color { border-bottom: 2px solid #3c3c3c; display: grid; grid-template-rows: 27px 67px 1fr; }
.ptabs { display: grid; background: #434343; font-weight: 700; font-size: 9.5px; letter-spacing: -.1px; color: #a5a5a5; }
.c { grid-template-columns: 32px 57px 58px 52px 1fr; }
.l { grid-template-columns: 55px 81px 45px 1fr; }
.ptabs span { padding-left: 8px; line-height: 25px; border-right: 1px solid #3a3a3a; }
.ptabs .a { background: #535353; color: #f2f2f2; padding-left: 8px; }
.burger { justify-self: end; align-self: center; margin-right: 4px; width: 9px; height: 7px; background: repeating-linear-gradient(#aaa 0 1px, #777 1px 2px); }
.hsb { display: grid; grid-template-columns: 46px 1fr; grid-template-rows: repeat(3, 20.500px); padding: 6px 0 0 9px; }
.hsb > .swatch { grid-row: 1/4; margin-top: 3px; }
.sl { grid-column: 2; display: grid; grid-template-columns: 12px 155px 35px 1fr; margin-left: -10px; }
.sl span { line-height: 20px; color: #ccc; }
.sl .tr { height: 6px; margin-top: 1px; position: relative; }
.sl em { margin-left: 4px; margin-right: -4px; height: 16px; border: 1px solid #686868; background: #454545; padding-left: 4px; font-size: 9.5px; line-height: 15px; margin-top: 1px; }
.sl span:last-child { padding-left: 11px; }
.hue { background: linear-gradient(90deg, red, #ff0 17%, #0f0 24%, #0f0 36%, #0ff 50%, #00f 67%, #f0f 82%, #f01030); }
.sat { background: #000; }
.bri { background: linear-gradient(90deg, #000, #111 8%, #fff); }
.th1 { position: absolute; left: -4px; top: 7px; width: 10px; height: 9px; fill: #eee; }
.wheel { position: relative; padding: 7px 0 0 44px; }
.ring { width: 192px; height: 192px; border-radius: 50%; background: conic-gradient(from 90deg, red, #f0f 60deg, #00f 120deg, #0ff 180deg, #0f0 225deg, #0f0 265deg, #ff0 300deg, red); }
.iso { isolation: isolate; }
.scr { mix-blend-mode: screen; }
.addc { position: absolute; right: 17px; bottom: 19px; }
.layers { display: grid; grid-template-rows: 27px 30px 26px 26px 27px 147px 25px; color: #d5d5d5; }
.prow { display: grid; align-items: center; border-bottom: 1px solid #434343; padding-left: 4px; }
.prow svg { width: 13px; height: 13px; }
.prow .i8 { width: 8px; height: 8px; }
.prow .i10 { width: 10px; height: 10px; margin-right: 4px; }
.prow .sel { background: #424242; border-color: #5a5a5a; }
.r1 { grid-template-columns: 131px 23px 24px 21px 22px 36px 10px; padding-top: 5px; }
.tipo { width: 101px; height: 19px; }
.tser { font: bold 14px/14px "Liberation Serif", serif; }
.tog { width: 8px; height: 17px; border-radius: 4px; background: radial-gradient(circle at 4px 4px, #ddd 3.500px, #3c3c3c 4px); margin-top: -2px; }
.r2 { grid-template-columns: 174px 51px 48px; }
.r2 .sel { width: 168px; }
.r3 { grid-template-columns: 28px 21px 22px 104px 8px 1fr; color: #8c8c8c; }
.r3 .lab { color: #8c8c8c; }
.r3 .prop { font-size: 9.8px; padding-left: 6px; letter-spacing: -.2px; }
.lk { position: relative; font: italic 14px/14px "Open Sans", sans-serif; }
.lk .s { position: absolute; left: 7px; top: 7px; width: 9px; height: 9px; }
.ck { width: 9px; height: 9px; background: #8c8c8c; color: #535353; font-size: 9px; line-height: 9px; border-radius: 1px; justify-self: center; }
.r4 { grid-template-columns: 32px 21px 21px 20px 21px 75px 35px 48px; border: 0; }
.list { background: #4c4c4c; border-bottom: 1px solid #414141; }
.layer { width: 266px; height: 39px; display: grid; grid-template-columns: 28px 1fr; background: #535353; border-bottom: 1px solid #444; font-size: 9.5px; letter-spacing: -.15px; }
.sel1 { height: 37px; }
.sel1 .lbody { background: #6a6a6a; }
.ey { border-right: 1px solid #474747; display: grid; place-items: center; }
.ey svg { width: 13px; height: 13px; }
.lbody { display: flex; align-items: center; padding-left: 4px; }
.lbody em { font-style: italic; }
.thumb { width: 31px; height: 31px; background: #fff; border: 1px solid #333; margin-right: 7px; }
.chk { border: 2px solid #eee; outline: 1px solid #333; outline-offset: -3px; background: linear-gradient(#fff, #fff) center / 20px 10px no-repeat, repeating-conic-gradient(#c4c4c4 0 25%, #fff 0 50%) 0 0 / 7px 7px; }
.lk2 { width: 11px; height: 11px; margin-left: auto; margin-right: 15px; }
.pfoot { display: grid; grid-template-columns: 26px 24px 26px 25px 25px 26px 20px; padding: 0 0 1px 92px; align-items: center; }
.pfoot svg { width: 12px; height: 12px; }
.pfoot em { font: italic 14px/14px "Open Sans", sans-serif; letter-spacing: -.5px; }
.off { opacity: .45; }

/* Windows taskbar */
.etask { display: flex; background: #d6d6d6; color: #111; }
.start { width: 46px; background: #d9d1ca; display: grid; place-items: center; padding-right: 2px; }
.find { width: 321px; background: #fff; border: 1px solid #c5c5c5; display: flex; align-items: center; padding-left: 9px; margin-right: 3px; }
.find em { font-size: 14px; letter-spacing: -.25px; margin-left: 9px; color: #3a3a3a; white-space: nowrap; }
.app { width: 37px; margin: 0 5px 0 4px; display: grid; place-items: center; border-bottom: 3px solid #0f6cbd; padding-top: 2px; }
.act { width: 45px; margin: 0; background: #efefef; }
.psi { width: 20px; height: 20px; border-radius: 4px; background: #001e36; color: #31a8ff; font-size: 10px; line-height: 19px; text-align: center; }
.tray { margin-left: auto; display: grid; grid-template-columns: 23px 23px 23px 21px 26px 27px 31px 64px 47px; align-items: center; justify-items: start; width: 285px; }
.tray svg { width: 16px; height: 16px; }
.tray .k { width: 21px; height: 14px; }
.clock { font-size: 10.8px; line-height: 16px; text-align: center; letter-spacing: -.3px; width: 56px; white-space: nowrap; margin-top: -1px; }
.nt { position: relative; margin-left: 8px; }
.nt svg { width: 22px; height: 20px; }
.nt i { position: absolute; left: 12px; top: 6px; width: 7px; font-size: 9px; text-align: center; }
.mini .start { width: 27px; padding: 0; }
.mini .find { width: 189px; padding-left: 5px; border: 0; margin-right: 3px; }
.mini .find em { font-size: 8px; margin-left: 6px; letter-spacing: 0; color: #555; }
.mini .app { width: 23px; margin: 0 2px; border-bottom-width: 2px; padding: 0; }
.mini .idle { border-color: transparent; }
.mini .act { width: 27px; margin: 0; }
.mini .psi { width: 12px; height: 12px; border-radius: 2px; font-size: 6px; line-height: 12px; }
.mini .tray { width: 167px; grid-template-columns: 13px 14px 13px 13px 15px 16px 17px 36px 30px; opacity: .8; }
.mini .tray svg { width: 9px; height: 9px; }
.mini .tray .k { width: 13px; height: 8px; }
.mini .clock { font-size: 6.500px; line-height: 9px; width: 34px; }
.mini .nt { margin-left: 7px; }
.mini .nt svg { width: 14px; height: 13px; }
.mini .nt i { font-size: 5px; line-height: 7px; left: 7px; top: 5px; }
```
